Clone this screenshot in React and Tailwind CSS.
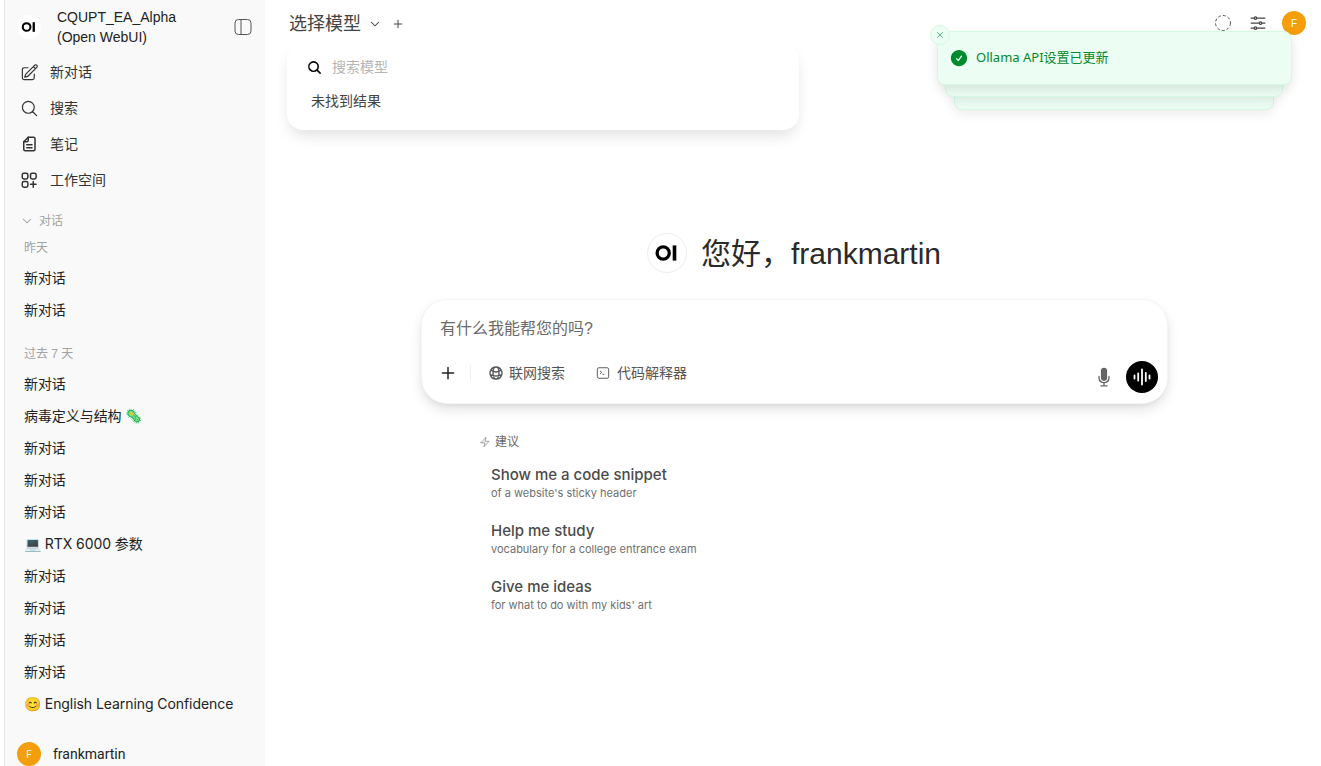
import React from "react";
import {
  HiOutlinePencilSquare,
  HiOutlineMagnifyingGlass,
  HiOutlineXMark,
  HiCheckCircle,
  HiChevronDown,
  HiOutlinePlus,
  HiOutlineAdjustmentsHorizontal,
  HiMicrophone,
  HiOutlineBolt,
  HiOutlineGlobeAlt,
} from "react-icons/hi2";

const Logo = ({ className }) => (
  <svg viewBox="0 0 40 40" className={className}>
    <circle cx="16" cy="20" r="6.4" fill="none" stroke="#000" strokeWidth="3.4" />
    <rect x="26" y="12" width="3.8" height="16" fill="#000" />
  </svg>
);

const NotesIcon = () => (
  <svg viewBox="0 0 24 24" fill="none" stroke="currentColor" strokeWidth="2" className="w-[18px] h-[18px] shrink-0">
    <path d="M11 3h7a2 2 0 0 1 2 2v14a2 2 0 0 1-2 2H7a2 2 0 0 1-2-2V9l6-6Z" strokeLinejoin="round" />
    <path d="M11 3v4a2 2 0 0 1-2 2H5M9 13h7M9 17h7" strokeLinecap="round" />
  </svg>
);

const WorkspaceIcon = () => (
  <svg viewBox="0 0 24 24" fill="none" stroke="currentColor" strokeWidth="2" className="w-[18px] h-[18px] shrink-0">
    <rect x="3" y="3" width="7.5" height="7.5" rx="2.2" />
    <rect x="14" y="3" width="7.5" height="7.5" rx="2.2" />
    <rect x="3" y="14" width="7.5" height="7.5" rx="2.2" />
    <path d="M17.7 14v7.5M14 17.7h7.5" strokeLinecap="round" />
  </svg>
);

const PanelIcon = () => (
  <svg viewBox="0 0 18 18" fill="none" stroke="#555" strokeWidth="1" className="w-[18px] h-[18px]">
    <rect x="1" y="1.5" width="16" height="15" rx="3.5" />
    <path d="M7 1.5v15" />
  </svg>
);

const TerminalIcon = () => (
  <svg viewBox="0 0 16 16" fill="none" stroke="#555" strokeWidth="1.1" className="w-[14px] h-[14px]">
    <rect x="1.5" y="2" width="13" height="12" rx="1.8" />
    <path d="M4.5 5.5 6.5 7.3 4.5 9M7.5 9.5h2" />
  </svg>
);

const WaveIcon = () => (
  <svg viewBox="0 0 20 20" stroke="#fff" strokeWidth="1.8" strokeLinecap="round" className="w-5 h-5">
    <path d="M2.5 8.5v3M6.2 6.5v7M10 2.5v15M13.8 6v8M17.5 8.5v3" />
  </svg>
);

const DashedCircle = () => (
  <svg viewBox="0 0 16 16" fill="none" stroke="#555" strokeWidth="1" strokeDasharray="3 2" className="w-4 h-4 mr-[17px]">
    <circle cx="8" cy="8" r="7.5" />
  </svg>
);

const NavItem = ({ icon, label }) => (
  <div className="h-9 flex items-center pl-[16px] gap-[13px] text-[14px] text-[#333]">
    <span className="w-[16px] flex justify-center">{icon}</span>
    <span>{label}</span>
  </div>
);

const Chat = ({ children }) => (
  <div className="h-8 flex items-center pl-[19px] text-[14px] tracking-[-0.07px] text-[#222] font-[Inter,'Noto_Sans_CJK_SC',sans-serif] whitespace-nowrap">
    {children}
  </div>
);

const GroupLabel = ({ children, className }) => (
  <div className={"pl-[19px] text-[12px] text-[#a3a3a3] " + className}>{children}</div>
);

const suggestions = [
  ["Show me a code snippet", "of a website's sticky header"],
  ["Help me study", "vocabulary for a college entrance exam"],
  ["Give me ideas", "for what to do with my kids' art"],
];

const recent = [
  "新对话",
  "病毒定义与结构 🦠",
  "新对话",
  "新对话",
  "新对话",
  "💻 RTX 6000 参数",
  "新对话",
  "新对话",
  "新对话",
  "新对话",
  "😊 English Learning Confidence",
];

export default function App() {
  return (
    <div className="relative h-screen w-full overflow-hidden bg-white flex pl-1 font-['Liberation_Sans','Noto_Sans_CJK_SC',sans-serif]">
      {/* sidebar */}
      <aside className="w-[261px] shrink-0 h-full bg-[#f9f9f9] border-l border-[#e5e5e5] flex flex-col">
        <div className="h-[54px] shrink-0 flex items-center pl-[12px] pr-[13px]">
          <div className="w-6 h-6 rounded-full bg-white shrink-0">
            <Logo className="w-6 h-6" />
          </div>
          <div className="ml-[16px] text-[14px] leading-5 text-[#222] flex-1">
            CQUPT_EA_Alpha
            <br />
            (Open WebUI)
          </div>
          <PanelIcon />
        </div>
        <NavItem icon={<HiOutlinePencilSquare className="w-[19px] h-[19px] shrink-0" />} label="新对话" />
        <NavItem icon={<HiOutlineMagnifyingGlass className="w-[19px] h-[19px] shrink-0" />} label="搜索" />
        <NavItem icon={<NotesIcon />} label="笔记" />
        <NavItem icon={<WorkspaceIcon />} label="工作空间" />
        <div className="flex items-center pl-[16px] gap-[6px] mt-[14px] text-[12px] text-[#a3a3a3] h-[18px]">
          <HiChevronDown className="w-[12px] h-[12px]" />
          对话
        </div>
        <GroupLabel className="mt-[9px] h-[18px]">昨天</GroupLabel>
        <div className="mt-[4px]">
          <Chat>新对话</Chat>
          <Chat>新对话</Chat>
        </div>
        <GroupLabel className="mt-[20px] h-[18px]">过去 7 天</GroupLabel>
        <div className="mt-[4px]">
          {recent.map((title, i) => (
            <Chat key={i}>{title}</Chat>
          ))}
        </div>
        <div className="mt-[23px] flex items-center pl-[12px] gap-[12px] text-[14px] text-[#222] font-[Roboto,sans-serif]">
          <div className="w-6 h-6 rounded-full bg-[#f59e0b] text-white text-[10px] flex items-center justify-center shrink-0">
            F
          </div>
          frankmartin
        </div>
      </aside>

      {/* main */}
      <main className="flex-1 min-w-0 flex flex-col">
        <header className="h-[46px] shrink-0 flex items-center pl-[24px] pr-[15px] text-[#444]">
          <span className="text-[18px] text-[#444] mt-[2px]">选择模型</span>
          <HiChevronDown className="w-[12px] h-[12px] ml-[8px] mt-[2px]" />
          <HiOutlinePlus className="w-[12px] h-[12px] ml-[11px] mt-[2px] stroke-2" />
          <div className="ml-auto flex items-center">
            <DashedCircle />
            <HiOutlineAdjustmentsHorizontal className="w-5 h-5 mr-[14px] text-[#444]" />
            <div className="w-6 h-6 rounded-full bg-[#f59e0b] text-white text-[10px] flex items-center justify-center">
              F
            </div>
          </div>
        </header>

        <div className="flex flex-col items-center pt-[187px]">
          <div className="flex items-center h-[40px] w-full pl-[382px]">
            <div className="w-10 h-10 rounded-full bg-white border border-[#eee] shrink-0">
              <Logo className="w-[38px] h-[38px]" />
            </div>
            <h1 className="ml-[14px] text-[30px] text-[#2a2a2a] font-normal">
              您好，frankmartin
            </h1>
          </div>

          <div className="self-start ml-[156px] mt-[26px] w-[747px] h-[105px] rounded-[26px] bg-white border border-[#f5f5f5] shadow-[0_6px_14px_-2px_rgba(0,0,0,0.14),0_2px_5px_-2px_rgba(0,0,0,0.08)] flex flex-col">
            <div className="pl-[18px] pt-[17px] text-[16px] leading-6 text-[#6b6b6b]">有什么我能帮您的吗?</div>
            <div className="flex-1 flex items-center pl-[17px] pr-[9px] pt-[2px]">
              <HiOutlinePlus className="w-[18px] h-[18px] text-[#222] stroke-2" />
              <div className="ml-[13px] w-px h-[16px] bg-[#f0f0f0]" />
              <HiOutlineGlobeAlt className="ml-[17px] w-[16px] h-[16px] text-[#555] stroke-2" />
              <span className="ml-[5px] text-[14px] text-[#555]">联网搜索</span>
              <span className="ml-[31px]"><TerminalIcon /></span>
              <span className="ml-[7px] text-[14px] text-[#555]">代码解释器</span>
              <div className="ml-auto flex items-center mt-[8px]">
                <HiMicrophone className="w-[20px] h-[20px] text-[#666] mr-[12px]" />
                <div className="w-8 h-8 rounded-full bg-black flex items-center justify-center">
                  <WaveIcon />
                </div>
              </div>
            </div>
          </div>

          <div className="self-start ml-[214px] mt-[29px] w-[400px] font-[Inter,'Noto_Sans_CJK_SC',sans-serif]">
            <div className="flex items-center gap-[4px] text-[12px] text-[#666] h-[18px]">
              <HiOutlineBolt className="w-[12px] h-[12px] text-[#888]" />
              建议
            </div>
            <div className="pl-[12px] mt-[14px] flex flex-col gap-[18px]">
              {suggestions.map(([title, sub]) => (
                <div key={title} className="h-[38px]">
                  <div className="text-[15px] leading-[20px] font-medium text-[#4b4b4b]">{title}</div>
                  <div className="text-[11px] leading-[16px] text-[#6f6f6f]">{sub}</div>
                </div>
              ))}
            </div>
          </div>
        </div>
      </main>

      {/* model selector dropdown */}
      <div className="absolute left-[287px] top-[44px] w-[512px] h-[86px] rounded-2xl bg-white shadow-[0_8px_16px_-4px_rgba(0,0,0,0.14)]">
        <div className="flex items-center pl-[20px] h-[46px]">
          <HiOutlineMagnifyingGlass className="w-[15px] h-[15px] text-black stroke-[2.5]" />
          <span className="ml-[10px] text-[14px] text-[#b5b5b5]">搜索模型</span>
        </div>
        <div className="pl-[24px] text-[14px] text-[#444] mt-[1px]">未找到结果</div>
      </div>

      {/* toast stack */}
      <div className="absolute left-[954px] top-[90px] w-[320px] h-[20px] rounded-[8px] bg-[#ecfdf3] border border-[#d3fae3] shadow-[0_4px_12px_rgba(0,0,0,0.08)]" />
      <div className="absolute left-[945px] top-[75px] w-[338px] h-[22px] rounded-[8px] bg-[#ecfdf3] border border-[#d3fae3] shadow-[0_4px_12px_rgba(0,0,0,0.08)]" />
      <div className="absolute left-[937px] top-[31px] w-[355px] h-[54px] rounded-[8px] bg-[#ecfdf3] border border-[#d3fae3] shadow-[0_4px_12px_rgba(0,0,0,0.1)] flex items-center pl-[11px] text-[#008a2e] font-['Noto_Sans','Noto_Sans_CJK_SC',sans-serif]">
        <HiCheckCircle className="w-[20px] h-[20px] shrink-0" />
        <span className="ml-[7px] text-[13px]">Ollama API设置已更新</span>
      </div>
      <div className="absolute left-[930px] top-[25px] w-5 h-5 rounded-full bg-[#ecfdf3] border border-[#d3fae3] flex items-center justify-center text-[#008a2e]">
        <HiOutlineXMark className="w-[10px] h-[10px]" />
      </div>
    </div>
  );
}
